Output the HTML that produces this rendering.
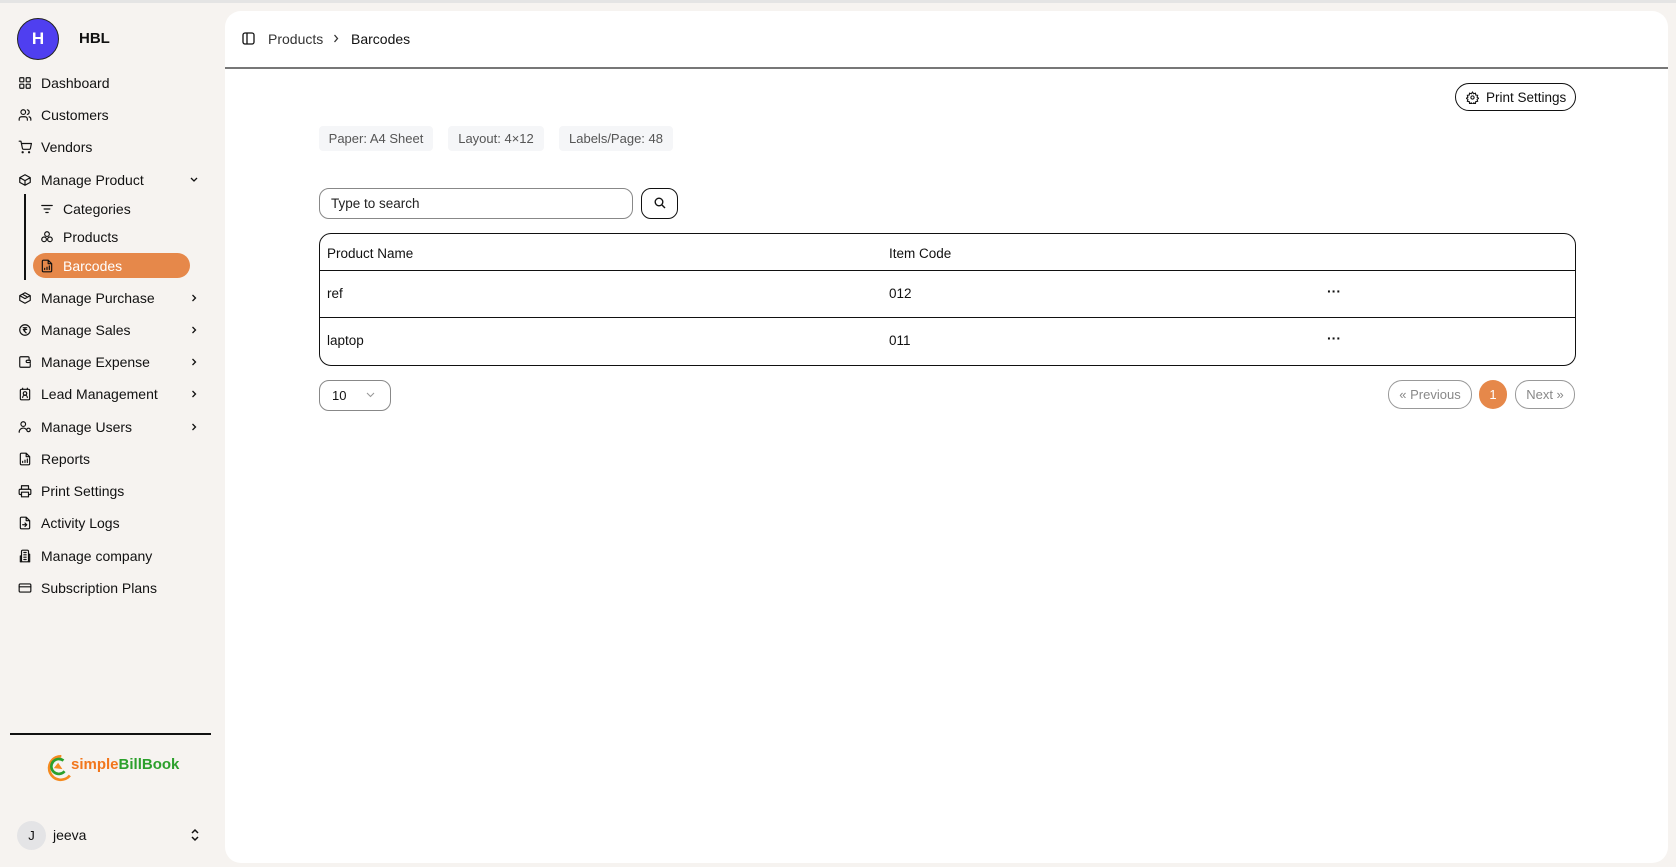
<!DOCTYPE html>
<html><head><meta charset="utf-8"><style>
*{box-sizing:border-box;margin:0;padding:0}
body{width:1676px;height:867px;background:#f6f3f0;font-family:"Liberation Sans",sans-serif;font-size:14px;color:#111;position:relative;overflow:hidden}
.a{position:absolute}
.nav{position:absolute;left:18px;display:flex;align-items:center;height:20px;font-size:14px;color:#111}
.nav svg{width:14px;height:14px;margin-right:9px;fill:none;stroke:#111;stroke-width:2;stroke-linecap:round;stroke-linejoin:round}
.chev{position:absolute;left:189px;width:10px;height:10px}
.chip{position:absolute;top:126px;height:25px;background:#f5f6f8;border-radius:4px;color:#555;font-size:13px;line-height:25px;text-align:center}
.row{position:absolute;left:0;right:0;border-top:1.5px solid #111}
</style></head><body>
<div class="a" style="left:0;top:0;width:1676px;height:3px;background:#e4e4e4"></div>
<div class="a" style="left:17px;top:18px;width:42px;height:42px;border-radius:50%;background:#4f3ff0;border:1px solid #222;color:#fff;font-weight:bold;font-size:17px;line-height:40px;text-align:center">H</div>
<div class="a" style="left:79px;top:30px;font-weight:bold;font-size:15px">HBL</div>

<div class="nav" style="top:73px"><svg viewBox="0 0 24 24"><rect x="3" y="3" width="7" height="7" rx="1"/><rect x="14" y="3" width="7" height="7" rx="1"/><rect x="3" y="14" width="7" height="7" rx="1"/><rect x="14" y="14" width="7" height="7" rx="1"/></svg>Dashboard</div>
<div class="nav" style="top:105px"><svg viewBox="0 0 24 24"><circle cx="9" cy="7" r="4"/><path d="M2 21v-2a4 4 0 0 1 4-4h6a4 4 0 0 1 4 4v2M16 3.1a4 4 0 0 1 0 7.8M22 21v-2a4 4 0 0 0-3-3.9"/></svg>Customers</div>
<div class="nav" style="top:137px"><svg viewBox="0 0 24 24"><circle cx="8" cy="21" r="1"/><circle cx="19" cy="21" r="1"/><path d="M2 2h3l2.6 12.4a2 2 0 0 0 2 1.6h9.7a2 2 0 0 0 2-1.6L23 6H6"/></svg>Vendors</div>
<div class="nav" style="top:170px"><svg viewBox="0 0 24 24"><path d="M21 8l-9-5-9 5v8l9 5 9-5zM3 8l9 5 9-5M12 13v8"/></svg>Manage Product</div>
<svg class="chev" style="top:175px" viewBox="0 0 10 10" fill="none" stroke="#111" stroke-width="1.3"><path d="M2 3l3 3 3-3"/></svg>
<div class="a" style="left:24px;top:194px;width:1.5px;height:86px;background:#111"></div>
<div class="nav" style="top:199px;left:40px"><svg viewBox="0 0 24 24"><path d="M3 6h18M7 12h10M10 18h4"/></svg>Categories</div>
<div class="nav" style="top:227px;left:40px"><svg viewBox="0 0 24 24"><circle cx="12" cy="7" r="4"/><circle cx="7" cy="16" r="4"/><circle cx="17" cy="16" r="4"/></svg>Products</div>
<div class="a" style="left:33px;top:253px;width:157px;height:25px;border-radius:13px;background:#e6884a"></div>
<div class="nav" style="top:256px;left:40px;color:#fff"><svg viewBox="0 0 24 24" style="stroke:#111"><path d="M14 2H6a2 2 0 0 0-2 2v16a2 2 0 0 0 2 2h12a2 2 0 0 0 2-2V8zM14 2v6h6M8 18v-2M12 18v-4M16 18v-6"/></svg>Barcodes</div>
<div class="nav" style="top:288px"><svg viewBox="0 0 24 24"><path d="M21 8l-9-5-9 5v8l9 5 9-5zM3 8l9 5 9-5M7.5 5.5l9 5"/></svg>Manage Purchase</div>
<div class="nav" style="top:320px"><svg viewBox="0 0 24 24"><circle cx="12" cy="12" r="9"/><path d="M9 8h6M9 11h6M10 8c3 0 3 5 0 5l4 4"/></svg>Manage Sales</div>
<div class="nav" style="top:352px"><svg viewBox="0 0 24 24"><path d="M19 7V5a2 2 0 0 0-2-2H5a2 2 0 0 0-2 2v14a2 2 0 0 0 2 2h14a2 2 0 0 0 2-2v-4M21 9h-5a2 2 0 0 0 0 4h5z"/></svg>Manage Expense</div>
<div class="nav" style="top:384px"><svg viewBox="0 0 24 24"><rect x="4" y="4" width="16" height="18" rx="2"/><path d="M8 2v2M16 2v2"/><circle cx="12" cy="11" r="3"/><path d="M8 18a4 4 0 0 1 8 0"/></svg>Lead Management</div>
<div class="nav" style="top:417px"><svg viewBox="0 0 24 24"><circle cx="9" cy="7" r="4"/><path d="M2 21a7 7 0 0 1 12-5"/><circle cx="18" cy="17" r="3"/></svg>Manage Users</div>
<div class="nav" style="top:449px"><svg viewBox="0 0 24 24"><path d="M14 2H6a2 2 0 0 0-2 2v16a2 2 0 0 0 2 2h12a2 2 0 0 0 2-2V8zM14 2v6h6M8 18v-2M12 18v-4M16 18v-6"/></svg>Reports</div>
<div class="nav" style="top:481px"><svg viewBox="0 0 24 24"><path d="M6 9V3h12v6M6 18H4a2 2 0 0 1-2-2v-5a2 2 0 0 1 2-2h16a2 2 0 0 1 2 2v5a2 2 0 0 1-2 2h-2"/><rect x="6" y="14" width="12" height="8"/></svg>Print Settings</div>
<div class="nav" style="top:513px"><svg viewBox="0 0 24 24"><path d="M14 2H6a2 2 0 0 0-2 2v16a2 2 0 0 0 2 2h12a2 2 0 0 0 2-2V8zM14 2v6h6M8 15h7M12 12l3 3-3 3"/></svg>Activity Logs</div>
<div class="nav" style="top:546px"><svg viewBox="0 0 24 24"><rect x="6" y="2" width="12" height="20" rx="2"/><path d="M6 12H4v10h2M18 9h2v13h-2M10 6h4M10 10h4M10 14h4M10 18h4"/></svg>Manage company</div>
<div class="nav" style="top:578px"><svg viewBox="0 0 24 24"><rect x="2" y="5" width="20" height="14" rx="2"/><path d="M2 10h20"/></svg>Subscription Plans</div>
<svg class="chev" style="top:293px" viewBox="0 0 10 10" fill="none" stroke="#111" stroke-width="1.3"><path d="M3.5 2l3 3-3 3"/></svg>
<svg class="chev" style="top:325px" viewBox="0 0 10 10" fill="none" stroke="#111" stroke-width="1.3"><path d="M3.5 2l3 3-3 3"/></svg>
<svg class="chev" style="top:357px" viewBox="0 0 10 10" fill="none" stroke="#111" stroke-width="1.3"><path d="M3.5 2l3 3-3 3"/></svg>
<svg class="chev" style="top:389px" viewBox="0 0 10 10" fill="none" stroke="#111" stroke-width="1.3"><path d="M3.5 2l3 3-3 3"/></svg>
<svg class="chev" style="top:422px" viewBox="0 0 10 10" fill="none" stroke="#111" stroke-width="1.3"><path d="M3.5 2l3 3-3 3"/></svg>

<div class="a" style="left:10px;top:733px;width:201px;height:1.5px;background:#111"></div>
<svg class="a" style="left:40px;top:751px" width="32" height="32" viewBox="0 0 30 30" fill="none"><path d="M20 5a11 11 0 1 0 8 18" stroke="#f58a1f" stroke-width="2.5"/><path d="M22 9a7 7 0 1 0 1 10" stroke="#2ca02c" stroke-width="2.5"/><path d="M13 16l4-5 4 6z" fill="#f58a1f"/></svg>
<div class="a" style="left:71px;top:756px;font-weight:bold;font-size:15px"><span style="color:#f2761c">simple</span><span style="color:#2ca02c">BillBook</span></div>
<div class="a" style="left:17px;top:821px;width:29px;height:29px;border-radius:50%;background:#e4e4e6;text-align:center;line-height:29px;font-size:13px">J</div>
<div class="a" style="left:53px;top:827px;font-size:14px">jeeva</div>
<svg class="a" style="left:190px;top:827px" width="10" height="16" viewBox="0 0 10 16" fill="none" stroke="#111" stroke-width="1.5"><path d="M2 6l3-3 3 3M2 10l3 3 3-3"/></svg>

<div class="a" style="left:225px;top:11px;width:1443px;height:852px;background:#fff;border-radius:16px"></div>
<svg class="a" style="left:242px;top:32px" width="13" height="13" viewBox="0 0 13 13" fill="none" stroke="#111" stroke-width="1.3"><rect x="1" y="1" width="11" height="11" rx="2"/><path d="M5 1v11"/></svg>
<div class="a" style="left:268px;top:31px;color:#333">Products</div>
<svg class="a" style="left:332px;top:34px" width="8" height="9" viewBox="0 0 8 9" fill="none" stroke="#333" stroke-width="1.3"><path d="M2.5 1l3 3.5-3 3.5"/></svg>
<div class="a" style="left:351px;top:31px">Barcodes</div>
<div class="a" style="left:225px;top:67px;width:1443px;height:1.5px;background:#777"></div>

<div class="a" style="left:1455px;top:83px;width:121px;height:28px;border:1.3px solid #111;border-radius:14px;font-size:13.5px;line-height:28px;padding-left:30px">Print Settings</div>
<svg class="a" style="left:1466px;top:91px" width="13" height="13" viewBox="0 0 24 24" fill="none" stroke="#111" stroke-width="2"><circle cx="12" cy="12" r="3"/><path d="M12 2l2 3 3.5-1 .5 3.5 3.5.5-1 3.5 3 2-3 2 1 3.5-3.5.5-.5 3.5-3.5-1-2 3-2-3-3.5 1-.5-3.5-3.5-.5 1-3.5-3-2 3-2-1-3.5 3.5-.5.5-3.5 3.5 1z"/></svg>

<div class="chip" style="left:319px;width:114px">Paper: A4 Sheet</div>
<div class="chip" style="left:448px;width:96px">Layout: 4×12</div>
<div class="chip" style="left:559px;width:114px">Labels/Page: 48</div>

<div class="a" style="left:319px;top:188px;width:314px;height:31px;border:1.3px solid #888;border-radius:10px;line-height:29px;padding-left:11px;font-size:13.5px;color:#222">Type to search</div>
<div class="a" style="left:641px;top:188px;width:37px;height:31px;border:1.3px solid #111;border-radius:10px"></div>
<svg class="a" style="left:654px;top:197px" width="12" height="12" viewBox="0 0 12 12" fill="none" stroke="#111" stroke-width="1.4"><circle cx="5" cy="5" r="3.8"/><path d="M8 8l3 3"/></svg>

<div class="a" style="left:319px;top:233px;width:1257px;height:133px;border:1.5px solid #111;border-radius:12px;overflow:hidden">
 <div class="a" style="left:7px;top:12px;font-size:13.5px">Product Name</div>
 <div class="a" style="left:569px;top:12px;font-size:13.5px">Item Code</div>
 <div class="row" style="top:36px"></div>
 <div class="a" style="left:7px;top:52px;font-size:13.5px">ref</div>
 <div class="a" style="left:569px;top:52px;font-size:13.5px">012</div>
 <div class="a" style="left:1007px;top:49px;font-weight:bold;font-size:14px">···</div>
 <div class="row" style="top:83px"></div>
 <div class="a" style="left:7px;top:99px;font-size:13.5px">laptop</div>
 <div class="a" style="left:569px;top:99px;font-size:13.5px">011</div>
 <div class="a" style="left:1007px;top:96px;font-weight:bold;font-size:14px">···</div>
</div>

<div class="a" style="left:319px;top:380px;width:72px;height:31px;border:1.3px solid #888;border-radius:10px;padding-left:12px;line-height:29px;font-size:13px">10</div>
<svg class="a" style="left:366px;top:392px" width="9" height="6" viewBox="0 0 9 6" fill="none" stroke="#999" stroke-width="1.1"><path d="M1 1l3.5 3.5L8 1"/></svg>

<div class="a" style="left:1388px;top:380px;width:84px;height:29px;border:1.3px solid #999;border-radius:14px;color:#888;font-size:13px;text-align:center;line-height:27px">« Previous</div>
<div class="a" style="left:1479px;top:380px;width:28px;height:29px;border-radius:14px;background:#e6884a;color:#fff;font-size:13px;text-align:center;line-height:29px">1</div>
<div class="a" style="left:1515px;top:380px;width:60px;height:29px;border:1.3px solid #999;border-radius:14px;color:#888;font-size:13px;text-align:center;line-height:27px">Next »</div>
</body></html>
